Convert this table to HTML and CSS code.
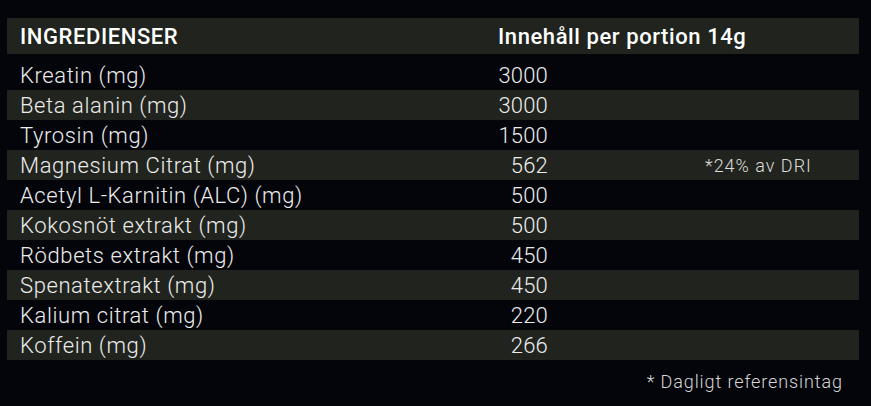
FILE: index.html
```html
<!DOCTYPE html>
<html lang="sv">
<head>
<meta charset="utf-8">
<title>Ingredienser</title>
<link rel="stylesheet" href="styles.css">
</head>
<body>
<div class="sheet">
  <div class="head">
    <div class="name">INGREDIENSER</div>
    <div class="amount-head">Innehåll per portion 14g</div>
  </div>
  <div class="rows">
    <div class="row"><div class="name">Kreatin (mg)</div><div class="val">3000</div><div class="note"></div></div>
    <div class="row"><div class="name">Beta alanin (mg)</div><div class="val">3000</div><div class="note"></div></div>
    <div class="row"><div class="name">Tyrosin (mg)</div><div class="val">1500</div><div class="note"></div></div>
    <div class="row"><div class="name">Magnesium Citrat (mg)</div><div class="val">562</div><div class="note">*24% av DRI</div></div>
    <div class="row"><div class="name">Acetyl L-Karnitin (ALC) (mg)</div><div class="val">500</div><div class="note"></div></div>
    <div class="row"><div class="name">Kokosnöt extrakt (mg)</div><div class="val">500</div><div class="note"></div></div>
    <div class="row"><div class="name">Rödbets extrakt (mg)</div><div class="val">450</div><div class="note"></div></div>
    <div class="row"><div class="name">Spenatextrakt (mg)</div><div class="val">450</div><div class="note"></div></div>
    <div class="row"><div class="name">Kalium citrat (mg)</div><div class="val">220</div><div class="note"></div></div>
    <div class="row"><div class="name">Koffein (mg)</div><div class="val">266</div><div class="note"></div></div>
  </div>
  <div class="footnote">* Dagligt referensintag</div>
</div>
</body>
</html>
```
FILE: styles.css
```css
html, body {
  margin: 0;
  padding: 0;
  background: #04050a;
}

body {
  font-family: Roboto, "Liberation Sans", sans-serif;
  color: #ececec;
}

.sheet {
  width: 852px;
  padding: 18px 0 0 7px;
}

.head {
  height: 36px;
  background: #21241e;
  display: grid;
  grid-template-columns: 491px 1fr;
  align-items: center;
  font-size: 22px;
  font-weight: 500;
  letter-spacing: 0.58px;
  color: #ffffff;
}

.head .name {
  padding-left: 13px;
}

.rows {
  margin-top: 6px;
}

.row {
  height: 30px;
  display: grid;
  grid-template-columns: 490px 51px 1fr;
  align-items: center;
  font-size: 22px;
  font-weight: 300;
}

.row:nth-child(even) {
  background: #21241e;
}

.row .name {
  padding-left: 13px;
  letter-spacing: 0.6px;
}

.val {
  text-align: right;
  letter-spacing: 0.2px;
}

.note {
  padding-left: 157px;
  font-size: 18px;
  letter-spacing: 1px;
  color: #dcdcdc;
}

.footnote {
  margin-top: 10px;
  padding-right: 16px;
  text-align: right;
  font-size: 18px;
  line-height: 24px;
  font-weight: 300;
  letter-spacing: 0.9px;
  color: #d6d6d6;
}
```
